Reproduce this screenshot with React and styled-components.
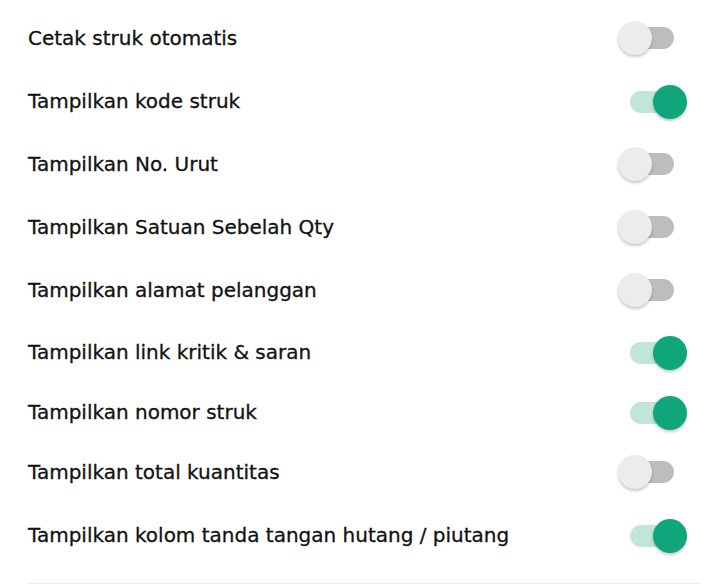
import React, { useState } from 'react';
import styled, { createGlobalStyle } from 'styled-components';

const Global = createGlobalStyle`
  body {
    margin: 0;
    background: #ffffff;
    font-family: "DejaVu Sans", "Noto Sans", sans-serif;
  }
`;

const Page = styled.main`
  width: 720px;
  height: 588px;
  padding-top: 6px;
  box-sizing: border-box;
  display: flex;
  flex-direction: column;
  overflow: hidden;
`;

const List = styled.ul`
  list-style: none;
  margin: 0;
  padding: 0;
  display: flex;
  flex-direction: column;
`;

const Row = styled.li`
  height: ${(p) => p.$h}px;
  display: flex;
  align-items: center;
  justify-content: space-between;
  padding: 0 46px 0 28px;
`;

const Label = styled.span`
  font-size: 20px;
  color: #121212;
  -webkit-text-stroke: 0.3px #121212;
`;

const Divider = styled.hr`
  margin: 17px 20px 0 28px;
  border: none;
  border-top: 1px solid #eeeeee;
`;

const Switch = styled.button`
  position: relative;
  width: 44px;
  height: 22px;
  padding: 0;
  border: none;
  border-radius: 11px;
  background: ${(p) => (p.$on ? '#bfe6d9' : '#bdbdbd')};
  cursor: pointer;
  margin-top: ${(p) => (p.$on ? '2px' : '0')};
`;

const Knob = styled.span`
  position: absolute;
  top: -6px;
  left: ${(p) => (p.$on ? '23px' : '-12px')};
  width: 34px;
  height: 34px;
  border-radius: 50%;
  background: ${(p) => (p.$on ? '#10a67b' : '#ececec')};
  box-shadow: 0 2px 3px rgba(0, 0, 0, 0.22);
`;

const items = [
  { label: 'Cetak struk otomatis', on: false, h: 63 },
  { label: 'Tampilkan kode struk', on: true, h: 63 },
  { label: 'Tampilkan No. Urut', on: false, h: 63 },
  { label: 'Tampilkan Satuan Sebelah Qty', on: false, h: 63 },
  { label: 'Tampilkan alamat pelanggan', on: false, h: 63 },
  { label: 'Tampilkan link kritik & saran', on: true, h: 62 },
  { label: 'Tampilkan nomor struk', on: true, h: 57 },
  { label: 'Tampilkan total kuantitas', on: false, h: 63 },
  { label: 'Tampilkan kolom tanda tangan hutang / piutang', on: true, h: 63 },
];

export default function App() {
  const [state, setState] = useState(items.map((i) => i.on));
  const toggle = (idx) => setState(state.map((v, i) => (i === idx ? !v : v)));

  return (
    <>
      <Global />
      <Page>
        <List>
          {items.map((item, idx) => (
            <Row key={item.label} $h={item.h}>
              <Label>{item.label}</Label>
              <Switch $on={state[idx]} onClick={() => toggle(idx)}>
                <Knob $on={state[idx]} />
              </Switch>
            </Row>
          ))}
        </List>
        <Divider />
      </Page>
    </>
  );
}
